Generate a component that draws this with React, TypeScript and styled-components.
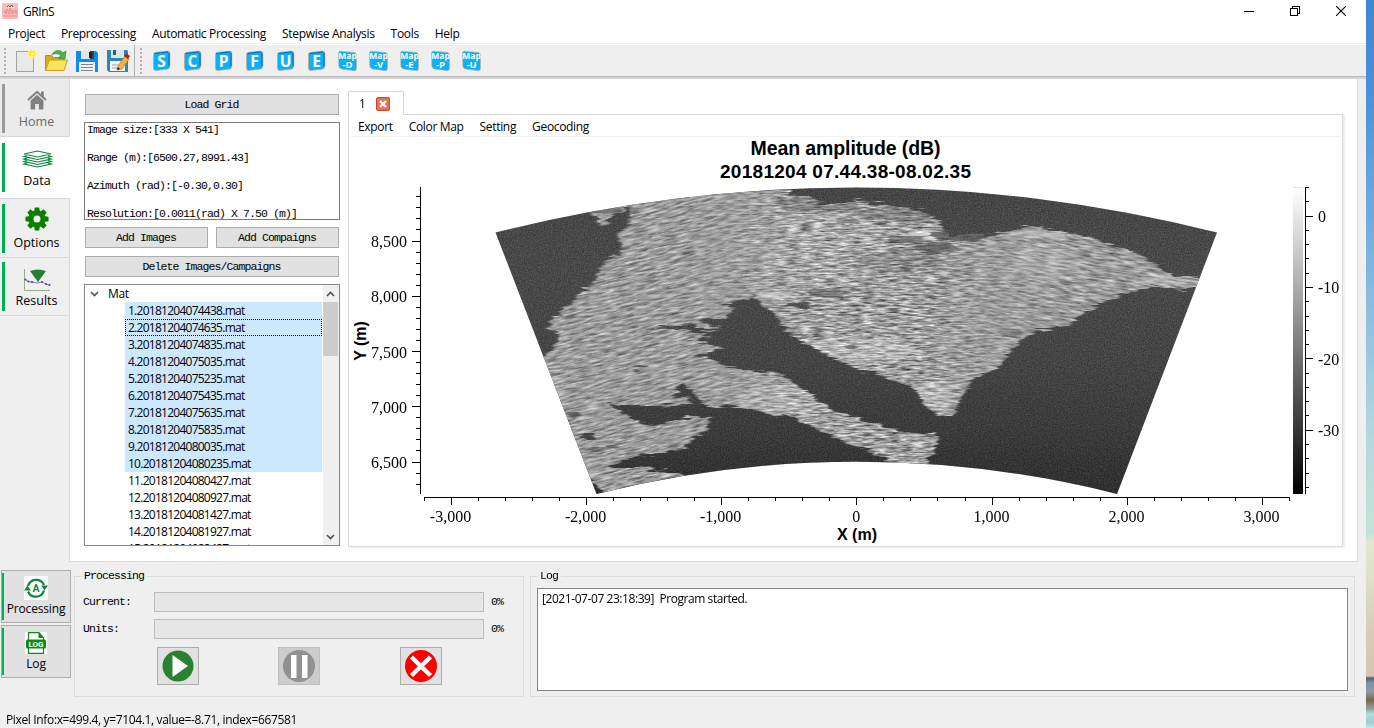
import React from "react";
import styled, { createGlobalStyle, css } from "styled-components";

const UI = '"Open Sans", "Noto Sans", sans-serif';
const MONO = '"Liberation Mono", monospace';

const GlobalStyle = createGlobalStyle`
  * { box-sizing: border-box; }
  body { margin: 0; background: #efefef; overflow: hidden; }
`;

const Desktop = styled.div`
  display: flex;
  width: 1374px;
  height: 728px;
  overflow: hidden;
  font: 12px/17px ${UI};
  letter-spacing: -0.35px;
  color: #000;
`;

const Wallpaper = styled.div`
  width: 8px;
  background: linear-gradient(
    #3f86d2 0, #4a90d8 90px, #6aa8df 200px, #8fc0e4 320px, #b4d9dd 440px, #bfe0d8 500px,
    #c4e2d4 534px, #e4e6cf 542px, #dddfc9 580px, #d6cdb8 630px, #d5c6b0 676px,
    #4a6478 678px, #7d93a3 683px, #8e9aa0 692px, #7a664f 700px, #8fa3a0 709px,
    #b5dcdd 714px, #9fcbd0 722px, #c4e6e6 728px
  );
`;

const Frame = styled.div`
  display: flex;
  flex-direction: column;
  width: 1366px;
  background: #efefef;
`;

const TitleBar = styled.header`
  display: flex;
  align-items: center;
  height: 23px;
  padding: 0 20px 2px 2px;
  background: #fff;
`;

const AppName = styled.span`
  flex: 1;
  padding: 1px 0 0 5px;
  letter-spacing: -0.45px;
`;

const WindowButtons = styled.div`
  display: flex;
  gap: 36px;
  padding-top: 0;
`;

const MenuBar = styled.nav`
  display: flex;
  gap: 16px;
  height: 21px;
  padding: 2px 8px 0;
  background: #fff;
  border-bottom: 1px solid #efefef;
  letter-spacing: -0.32px;
`;

const Toolbar = styled.div`
  display: flex;
  align-items: center;
  height: 35px;
  padding-bottom: 1px;
  border-top: 1px solid #fff;
  border-bottom: 2px solid #d4d4d4;
  box-shadow: inset 0 -1px #b9b9b9;
`;

const Grip = styled.div<{ $left: number; $right: number }>`
  width: 2px;
  height: 26px;
  margin: 0 ${(p) => p.$right}px 0 ${(p) => p.$left}px;
  background: repeating-linear-gradient(#b4b4b4 0 2px, #efefef 2px 4px);
`;

const ToolSlot = styled.div`
  display: flex;
  justify-content: center;
  width: 31px;
`;

const ToolDivider = styled.div`
  width: 1px;
  height: 32px;
  margin-left: 1px;
  background: #b0b0b0;
`;

const Work = styled.div`
  display: flex;
  height: 483px;
`;

const Sidebar = styled.aside`
  display: flex;
  flex-direction: column;
  width: 70px;
  padding-top: 1px;
  border-right: 1px solid #d9d9d9;
`;

const SideTab = styled.div<{ $height: number; $active?: boolean; $muted?: boolean; $gap?: number }>`
  display: flex;
  flex-direction: column;
  align-items: center;
  justify-content: flex-end;
  height: ${(p) => p.$height}px;
  width: ${(p) => (p.$active ? 70 : 69)}px;
  padding: 0 0 ${(p) => p.$gap ?? 5}px 4px;
  border-bottom: 1px solid #d9d9d9;
  background:
    linear-gradient(${(p) => (p.$muted ? "#999, #999" : "#00b050, #00b050")}) 2px 50% / 3px 49px no-repeat,
    ${(p) => (p.$active ? "#fff" : p.$muted ? "#ebebeb" : "#efefef")};
  color: ${(p) => (p.$muted ? "#6a6a6a" : "#000")};
  font-size: 12.5px;
  line-height: 18px;
  letter-spacing: 0;
`;

const TabIcon = styled.div<{ $lift?: number }>`
  display: flex;
  flex: 1;
  align-items: flex-end;
  padding-bottom: ${(p) => p.$lift ?? 3}px;
`;

const Page = styled.main`
  display: flex;
  gap: 8px;
  width: 1288px;
  padding: 12px 14px 14px 14px;
  background: #fff;
  border-right: 1px solid #d9d9d9;
  border-bottom: 1px solid #d9d9d9;
`;

const monoText = css`
  font: 11.5px/14px ${MONO};
  letter-spacing: -0.9px;
`;

const DataPanel = styled.section`
  display: flex;
  flex-direction: column;
  width: 256px;
  padding-top: 3px;
`;

const PushButton = styled.button`
  ${monoText}
  flex: 1;
  height: 21px;
  flex-shrink: 0;
  padding: 1px 1px 0 0;
  border: 1px solid #adadad;
  background: #e1e1e1;
  color: #000;
`;

const ButtonRow = styled.div<{ $bottom: number }>`
  display: flex;
  gap: 8px;
  padding: 0 1px;
  margin-bottom: ${(p) => p.$bottom}px;
`;

const InfoBox = styled.div`
  ${monoText}
  height: 98px;
  margin-bottom: 7px;
  padding-left: 2px;
  border: 1px solid #7a7a7a;
  overflow: hidden;
  white-space: pre;
`;

const TreeBox = styled.div`
  display: flex;
  height: 262px;
  border: 1px solid #828790;
`;

const TreeItems = styled.div`
  flex: 1;
  overflow: hidden;
`;

const TreeRoot = styled.div`
  display: flex;
  align-items: center;
  gap: 9px;
  height: 17px;
  padding-left: 5px;
`;

const TreeItem = styled.div<{ $selected?: boolean; $focused?: boolean }>`
  height: 17px;
  margin-left: 40px;
  margin-right: 1px;
  padding-left: 3px;
  line-height: 17px;
  letter-spacing: -0.74px;
  background: ${(p) => (p.$selected ? "#cce8ff" : "transparent")};
  ${(p) => p.$focused && "outline: 1px dotted #000; outline-offset: -1px;"}
`;

const ScrollTrack = styled.div`
  display: flex;
  flex-direction: column;
  width: 16px;
  background: #f0f0f0;
`;

const ScrollThumb = styled.div`
  width: 15px;
  height: 54px;
  background: #cdcdcd;
`;

const ScrollArrow = styled.div<{ $push?: boolean }>`
  display: flex;
  align-items: center;
  justify-content: center;
  width: 15px;
  height: 17px;
  ${(p) => p.$push && "margin-top: auto;"}
`;

const PlotPanel = styled.section`
  display: flex;
  flex-direction: column;
  width: 995px;
`;

const PlotTab = styled.div`
  display: flex;
  align-items: center;
  gap: 10px;
  width: 56px;
  height: 24px;
  flex-shrink: 0;
  margin-bottom: -1px;
  padding-left: 10px;
  border: 1px solid #d9d9d9;
  border-bottom: 0;
  background: #fff;
  z-index: 1;
`;

const PlotFrame = styled.div`
  height: 433px;
  flex-shrink: 0;
  border: 1px solid #d9d9d9;
  box-shadow: 2px 1px #f0f0f0;
`;

const PlotMenu = styled.nav`
  display: flex;
  gap: 16px;
  height: 22px;
  margin: 0 1px;
  padding: 3px 7px 0 8px;
  border-bottom: 1px solid #f2f2f2;
  letter-spacing: -0.33px;
`;

const Chart = styled.svg`
  display: block;
  font-family: "Liberation Serif", serif;
  font-size: 16px;
  letter-spacing: 0;
`;

const Bottom = styled.div`
  display: flex;
  height: 149px;
  padding-top: 8px;
`;

const DockButtons = styled.div`
  display: flex;
  flex-direction: column;
  gap: 2px;
  width: 74px;
  padding-left: 1px;
`;

const DockButton = styled.div`
  display: flex;
  flex-direction: column;
  align-items: center;
  justify-content: space-between;
  width: 70px;
  height: 53px;
  padding: 5px 0 4px;
  border: 1px solid #adadad;
  background: linear-gradient(#00b050, #00b050) 0 50% / 2px 47px no-repeat, #e1e1e1;
  font-size: 12px;
  line-height: 18px;
  letter-spacing: -0.15px;
`;

const Group = styled.fieldset<{ $width: number; $right: number }>`
  width: ${(p) => p.$width}px;
  height: 127px;
  margin: 0 ${(p) => p.$right}px 0 0;
  padding: 0;
  border: 1px solid #dcdcdc;
`;

const GroupTitle = styled.legend`
  ${monoText}
  height: 12px;
  line-height: 12px;
  margin-left: 7px;
  padding: 0 3px 0 2px;
`;

const ProgressList = styled.div`
  display: flex;
  flex-direction: column;
  gap: 7px;
  padding: 10px 0 0 8px;
`;

const ProgressRow = styled.div`
  ${monoText}
  display: flex;
  align-items: center;
  height: 20px;
  line-height: 16px;
`;

const ProgressName = styled.span`
  width: 71px;
`;

const ProgressTrack = styled.div`
  width: 330px;
  height: 20px;
  margin-right: 7px;
  border: 1px solid #bcbcbc;
  background: #e6e6e6;
`;

const ControlRow = styled.div`
  display: flex;
  padding: 8px 0 0 82px;
`;

const ControlButton = styled.button<{ $disabled?: boolean; $after?: number }>`
  display: flex;
  align-items: center;
  justify-content: center;
  width: 42px;
  height: 38px;
  margin-right: ${(p) => p.$after ?? 0}px;
  padding: 0;
  border: 1px solid ${(p) => (p.$disabled ? "#bfbfbf" : "#adadad")};
  background: ${(p) => (p.$disabled ? "#cccccc" : "#e1e1e1")};
`;

const LogBox = styled.div`
  width: 811px;
  height: 103px;
  margin-left: 6px;
  margin-top: 6px;
  padding: 1px 4px;
  border: 1px solid #828790;
  background: #fff;
  white-space: pre;
  letter-spacing: -0.43px;
`;

const StatusBar = styled.footer`
  padding: 0 6px;
`;

/* ---------- icons ---------- */

const LogoIcon = () => (
  <svg width="16" height="16" viewBox="0 0 16 16">
    <rect width="16" height="16" fill="#fcb9b9" />
    <path d="M3 5Q8-1 13 5Z" fill="#e9dede" />
    <path d="M5 4l1.500-1.500L8 4l1.500-2L11 4" stroke="#555" fill="none" />
    <path d="M1 10l2-3 1 4 1-5 2 5 1-6 2 6 1-4 2 3 1-3 1 4M1 13h14" stroke="#f07f84" strokeWidth=".8" fill="none" />
  </svg>
);

const NewIcon = () => (
  <svg width="24" height="24" viewBox="0 0 24 24">
    <rect x="3.500" y="2.500" width="17" height="20" fill="#e9e9e7" stroke="#a3a3a0" />
    <circle cx="19" cy="5" r="5" fill="#fdf27a" opacity=".75" />
    <circle cx="19" cy="5" r="2.600" fill="#fff200" />
    <circle cx="19" cy="5" r="1.200" fill="#fffde0" />
  </svg>
);

const OpenIcon = () => (
  <svg width="24" height="24" viewBox="0 0 24 24">
    <path d="M1.500 21.500V6.500h6l2 2h10v13z" fill="#d6ae1c" stroke="#b3901a" />
    <path d="M8 6c2-5 8-6 11-2l3-2-1 8-7-1 3-2c-2-3-6-3-9-1z" fill="#4db34a" stroke="#2c8a35" strokeWidth=".7" />
    <path d="M1.500 21.500l4-10.500h18l-3.500 10.500z" fill="#fbe45b" stroke="#c9a01e" />
  </svg>
);

const SaveIcon = () => (
  <svg width="24" height="24" viewBox="0 0 24 24">
    <path d="M1 2h20l2 2v19H1z" fill="#0d8ce8" />
    <path d="M6 2h13v8H6z" fill="#3d4450" />
    <path d="M6 2h9v8H6z" fill="#dfe6ea" />
    <rect x="14" y="3" width="3" height="6" fill="#222" />
    <path d="M4 13h16v10H4z" fill="#eef1f2" />
    <path d="M6 15.500h12M6 18.500h12M6 21.500h12" stroke="#7c8790" />
  </svg>
);

const SaveAsIcon = () => (
  <svg width="24" height="24" viewBox="0 0 24 24">
    <path d="M1 1h20l1 1v21H3l-2-2z" fill="#2f86b6" />
    <path d="M5 1h13v8H5z" fill="#d9e7ee" />
    <rect x="7" y="1" width="3" height="5" fill="#2f5f7c" />
    <path d="M4 12h15v10H4z" fill="#f4f7f8" />
    <path d="M6 16h7M6 19h6" stroke="#9aa6ad" />
    <path d="M12 17l7-10 4 3-7 10-5 1z" fill="#f2b43c" stroke="#b87818" strokeWidth=".7" />
    <path d="M18 7l2-3 4 3-2 3z" fill="#b81f24" />
    <path d="M11 21l1-3 2 2z" fill="#222" />
  </svg>
);

const LetterIcon = ({ lines }: { lines: string[] }) => (
  <svg width="20" height="22" viewBox="0 0 20 22" fontFamily='"Open Sans", sans-serif' fontWeight="700" fill="#fff" textAnchor="middle">
    {lines.length === 1 ? (
      <>
        <path d="M1.500 4Q2 2.500 4 2.300L15.500 1.200Q17.800 1 17.800 3v13q0 2.500-2 3L4 20.500Q1.500 20.700 1.500 18z" fill="#0ab0f8" stroke="#c9a58a" strokeWidth=".8" />
        <path d="M2.500 3.500L16 1.800M17 3v13" stroke="#0b6fae" strokeWidth="1.200" fill="none" />
        <text x="9.500" y="16.500" fontSize="15.500" letterSpacing="0">{lines[0]}</text>
      </>
    ) : (
      <>
        <path d="M.5 3Q.5 1 2.500 1.200L16.500 2.500Q18.500 3 18.500 5v13q0 3-2 2.700L3.500 19Q1 18.500 .8 16z" fill="#0ab0f8" stroke="#b9b79a" strokeWidth=".7" />
        <text letterSpacing="0" fontSize="8.500">
          <tspan x="9.500" y="9">{lines[0]}</tspan>
          <tspan x="9.500" y="18" fontSize="9.500">{lines[1]}</tspan>
        </text>
      </>
    )}
  </svg>
);

const HomeIcon = () => (
  <svg width="20" height="20" viewBox="0 0 20 20" fill="#808080">
    <path d="M14 1.500h2.800v6L14 5z" />
    <path d="M1 10L10 1.800 19 10" fill="none" stroke="#808080" strokeWidth="2" />
    <path d="M3.600 10.500L10 4.700l6.400 5.800V19.500h-4.600v-5.500H8.200v5.500H3.600z" />
  </svg>
);

const LayersIcon = () => (
  <svg width="31" height="18" viewBox="0 0 31 18" fill="none" stroke="#0b8a3e" strokeWidth="1.200">
    <path d="M15.500 1L29 4 15.500 7 2 4z" fill="#fff" />
    <path d="M5 5.500L2 6.500 15.500 9.500 29 6.500 26 5.500M5 8L2 9 15.500 12 29 9 26 8M5 10.500L2 11.500 15.500 14.500 29 11.500 26 10.500M5 13L2 14 15.500 17 29 14 26 13" />
  </svg>
);

const GearIcon = () => (
  <svg width="24" height="24" viewBox="-12 -12 24 24" fill="#0a8000">
    {[0, 45, 90, 135, 180, 225, 270, 315].map((a) => (
      <path key={a} d="M-3-7L-2.200-11.500H2.200L3-7z" transform={`rotate(${a})`} />
    ))}
    <circle r="6" fill="none" stroke="#0a8000" strokeWidth="5" />
  </svg>
);

const ResultsIcon = () => (
  <svg width="30" height="24" viewBox="0 0 30 24">
    <path d="M2.500 1v21.500H28" fill="none" stroke="#8fb08f" />
    <path d="M2 11l4 2.500 4 .5 5 1 5-1 4 2 4 1" fill="none" stroke="#8a76a8" />
    <g fill="#7030a0"><circle cx="3.500" cy="11.500" r="1" /><circle cx="6.500" cy="13.500" r="1" /><circle cx="10" cy="14" r="1" /><circle cx="20" cy="14" r="1" /><circle cx="24" cy="16" r="1" /><circle cx="27.500" cy="17" r="1" /></g>
    <path d="M8 3Q16 0 24 3L16 14z" fill="#258032" />
  </svg>
);

const CycleIcon = () => (
  <svg width="24" height="24" viewBox="0 0 24 24">
    <rect width="24" height="24" fill="#fff" />
    <g fill="none" stroke="#12853f" strokeWidth="2.200">
      <path d="M4 10A8.500 8.500 0 0 1 20 9" />
      <path d="M20 14.500A8.500 8.500 0 0 1 4 15.500" />
    </g>
    <path d="M17 9.500h7l-3.500 5zM7 14.500H0l3.500-5z" fill="#12853f" />
    <text x="12" y="16" fontSize="10.500" fontWeight="700" letterSpacing="0" textAnchor="middle" fill="#12853f" fontFamily="Roboto, sans-serif">A</text>
  </svg>
);

const LogIcon = () => (
  <svg width="22" height="24" viewBox="0 -1 22 24">
    <rect width="22" height="22" fill="#fff" />
    <path d="M3.500 8V.700H14l4.500 5V8M3.500 16v5.300h15V16" fill="none" stroke="#0c8a14" strokeWidth="1.200" />
    <path d="M13.500.500v5.500h5z" fill="#0c8a14" />
    <rect x="1" y="7.500" width="20" height="9" rx="1.500" fill="#0c8a14" />
    <text x="11" y="14.800" fontSize="8" fontWeight="700" letterSpacing="0" textAnchor="middle" fill="#fff" fontFamily="Roboto, sans-serif">LOG</text>
  </svg>
);

const Chevron = ({ up }: { up?: boolean }) => (
  <svg width="9" height="6" viewBox="0 0 9 6">
    <path d={up ? "M1 5l3.500-3.500L8 5" : "M1 1l3.500 3.500L8 1"} fill="none" stroke="#505050" strokeWidth="1.600" />
  </svg>
);

const CloseTabIcon = () => (
  <svg width="14" height="14" viewBox="0 0 14 14">
    <rect x=".5" y=".5" width="13" height="13" rx="1.500" fill="#dd7a54" stroke="#d4402a" />
    <path d="M4 4l6 6M10 4l-6 6" stroke="#fff" strokeWidth="2.200" />
  </svg>
);

/* ---------- radar amplitude plot ---------- */

const DARK_AREAS = [
  "M480 220L520 200 590 190 590 212 598 218 599 225 606 226 608 216 620 214 632 205 628 225 617 234 623 247 620 255 604 262 597 276 588 287 575 298 565 308 555 318 547 328 560 335 552 350 547 356 530 365Z",
  "M753 297L773 311 780 323 790 335 813 348 833 358 863 372 883 375 900 382 917 392 927 407 937 415 950 415 958 407 962 395 970 382 987 373 1000 365 1013 350 1023 338 1040 330 1067 327 1083 313 1103 302 1127 293 1147 287 1163 287 1177 290 1195 288 1240 290 1130 510 925 480 927 463 935 447 940 438 933 434 907 435 893 428 847 415 833 410 813 397 793 383 780 373 760 372 730 367 710 360 693 355 713 353 720 348 697 342 680 341 710 337 690 332 677 329 643 328 680 325 713 330 722 327 697 320 727 317 733 307 717 304 747 300Z",
  "M607 405L630 404 650 407 680 404 693 400 680 398 670 395 680 392 672 388 682 384 690 391 700 400 707 407 730 405 763 412 790 417 813 428 837 438 860 447 873 453 890 461 890 480 700 490 683 475 667 472 640 467 608 468 627 460 647 454 677 452 693 440 710 425 712 417 693 417 670 422 652 426 633 421 623 413Z",
  "M785 170L790 194 807 196 820 203 833 205 860 200 890 206 923 212 940 223 950 235 973 234 987 236 1000 232 1027 227 1057 230 1093 238 1127 250 1150 260 1167 273 1180 277 1198 277 1240 270 1240 180Z",
  "M588 480L604 492 590 500Z",
];

const DARK_SPOTS: [number, number, number, number, number][] = [
  [573, 415, 8, 3, 0.6], [588, 436, 8, 2, 0.9], [596, 449, 9, 2, 0.5], [640, 366, 8, 2, 0.8],
  [612, 448, 7, 2, 0.5], [797, 305, 12, 3, 0.9], [827, 293, 22, 5, 0.45], [848, 222, 12, 4, 0.5],
  [907, 240, 18, 5, 0.5], [935, 248, 22, 6, 0.6], [960, 235, 30, 6, 0.7], [900, 215, 50, 7, 0.3],
  [850, 348, 6, 3, 0.6], [820, 205, 40, 8, 0.3], [1010, 333, 12, 5, 0.3], [900, 262, 45, 12, 0.22],
  [600, 209, 22, 5, 0.5], [620, 222, 12, 8, 0.6],
];

const BRIGHT_SPOTS: [number, number, number, number, number][] = [
  [927, 235, 18, 6, 0.4], [965, 223, 18, 5, 0.35], [775, 295, 18, 4, 0.4], [855, 350, 60, 12, 0.25],
  [1045, 262, 35, 18, 0.12], [850, 220, 20, 6, 0.3], [1060, 234, 50, 4, 0.25], [935, 395, 18, 14, 0.25],
  [785, 400, 50, 16, 0.16], [1165, 280, 25, 6, 0.2], [820, 250, 70, 40, 0.08],
];

const Spots = ({ items, fill }: { items: [number, number, number, number, number][]; fill: string }) => (
  <>
    {items.map(([cx, cy, rx, ry, opacity], i) => (
      <ellipse key={i} cx={cx} cy={cy} rx={rx} ry={ry} fill={fill} opacity={opacity} />
    ))}
  </>
);

const WEDGE = "M495.500 232.500A1214 993.500 0 0 1 1217 232.500L1117 494A878 718 0 0 0 596.500 494Z";

const RadarImage = () => (
  <g>
    <defs>
      <clipPath id="wedge"><path d={WEDGE} /></clipPath>
      <linearGradient id="seaShade" x1="0" y1="0" x2="0" y2="1">
        <stop offset="0" stopColor="#fff" stopOpacity=".05" />
        <stop offset="1" stopColor="#000" stopOpacity=".25" />
      </linearGradient>
      <filter id="seaNoise" x="0" y="0" width="1" height="1" colorInterpolationFilters="sRGB">
        <feTurbulence type="fractalNoise" baseFrequency=".7" numOctaves="2" seed="4" />
        <feColorMatrix values=".26 0 0 0 .105 .26 0 0 0 .105 .26 0 0 0 .105 0 0 0 0 1" />
      </filter>
      <filter id="landNoise" x="0" y="0" width="1" height="1" colorInterpolationFilters="sRGB">
        <feTurbulence type="fractalNoise" baseFrequency=".08 .55" numOctaves="3" seed="9" />
        <feColorMatrix values="1 0 0 0 .125 1 0 0 0 .125 1 0 0 0 .125 0 0 0 0 1" />
      </filter>
      <filter id="calmNoise" x="0" y="0" width="1" height="1" colorInterpolationFilters="sRGB">
        <feTurbulence type="fractalNoise" baseFrequency=".07 .55" numOctaves="3" seed="21" />
        <feColorMatrix values=".8 0 0 0 .21 .8 0 0 0 .21 .8 0 0 0 .21 0 0 0 0 1" />
      </filter>
      <filter id="roughEdge" x="-.05" y="-.05" width="1.100" height="1.100" colorInterpolationFilters="sRGB">
        <feTurbulence type="fractalNoise" baseFrequency=".05 .3" numOctaves="3" seed="2" result="n" />
        <feDisplacementMap in="SourceGraphic" in2="n" scale="11" xChannelSelector="R" yChannelSelector="A" result="d" />
        <feGaussianBlur in="d" stdDeviation="1 .6" />
      </filter>
      <filter id="haze"><feGaussianBlur stdDeviation="3 1.200" /></filter>
      <linearGradient id="fadeLeft" gradientUnits="userSpaceOnUse" x1="690" y1="0" x2="800" y2="0">
        <stop offset="0" stopColor="#fff" /><stop offset="1" stopColor="#000" />
      </linearGradient>
      <linearGradient id="fadeRight" gradientUnits="userSpaceOnUse" x1="920" y1="0" x2="1060" y2="0">
        <stop offset="0" stopColor="#000" /><stop offset="1" stopColor="#fff" />
      </linearGradient>
      <mask id="leftMask" maskUnits="userSpaceOnUse" x="480" y="180" width="750" height="320"><rect x="480" y="180" width="750" height="320" fill="url(#fadeLeft)" /></mask>
      <mask id="rightMask" maskUnits="userSpaceOnUse" x="480" y="180" width="750" height="320"><rect x="480" y="180" width="750" height="320" fill="url(#fadeRight)" /></mask>
      <mask id="land" maskUnits="userSpaceOnUse" x="480" y="180" width="750" height="320">
        <g filter="url(#roughEdge)">
          <rect x="440" y="140" width="830" height="400" fill="#fff" />
          {DARK_AREAS.map((d) => <path key={d} d={d} fill="#000" />)}
          <Spots items={DARK_SPOTS} fill="#000" />
        </g>
      </mask>
    </defs>
    <g clipPath="url(#wedge)">
      <rect x="490" y="180" width="740" height="320" filter="url(#seaNoise)" />
      <rect x="490" y="180" width="740" height="320" fill="url(#seaShade)" />
      <g mask="url(#land)">
        <rect x="490" y="180" width="740" height="320" filter="url(#landNoise)" />
        <g mask="url(#leftMask)">
          <g transform="rotate(-13 640 340)"><rect x="440" y="100" width="400" height="460" filter="url(#calmNoise)" /></g>
        </g>
        <g mask="url(#rightMask)">
          <g transform="rotate(8 1080 300)"><rect x="880" y="120" width="370" height="400" filter="url(#calmNoise)" /></g>
        </g>
        <g filter="url(#haze)"><Spots items={BRIGHT_SPOTS} fill="#fff" /></g>
      </g>
    </g>
  </g>
);

const range = (n: number) => Array.from({ length: n }, (_, i) => i);

const RadarChart = () => (
  <Chart width="993" height="409" viewBox="349 137 993 409">
    <g fontFamily='"Liberation Sans", sans-serif' fontWeight="700" textAnchor="middle">
      <text x="845.500" y="155" fontSize="19.500" textLength="190">Mean amplitude (dB)</text>
      <text x="845.500" y="178" fontSize="19" textLength="251">20181204 07.44.38-08.02.35</text>
      <text x="857" y="540" fontSize="16">X (m)</text>
      <text transform="translate(365.500 341) rotate(-90)" fontSize="16">Y (m)</text>
    </g>
    <RadarImage />
    <g shapeRendering="crispEdges" stroke="#000" fill="none">
      <path d="M420.500 187V494M424 497.500H1290M1305.500 187V494" />
      {range(27).map((i) => {
        const y = Math.round(197.300 + i * 11.050) - 0.5;
        return <path key={i} d={`M${i % 5 === 4 ? 412 : 416} ${y}H420`} />;
      })}
      {range(33).map((i) => {
        const x = Math.floor(424.800 + i * 27.010) + 0.5;
        return <path key={i} d={`M${x} 498V${i % 5 === 1 ? 505 : 501}`} />;
      })}
      {range(22).map((i) => {
        const y = Math.round(187 + i * 14.280) + 0.5;
        return <path key={i} d={`M1306 ${y}H${i % 5 === 2 ? 1313 : 1309}`} />;
      })}
    </g>
    <g textAnchor="end">
      {["8,500", "8,000", "7,500", "7,000", "6,500"].map((t, i) => (
        <text key={t} x="407" y={247 + i * 55.250}>{t}</text>
      ))}
    </g>
    <g textAnchor="middle">
      {["-3,000", "-2,000", "-1,000", "0", "1,000", "2,000", "3,000"].map((t, i) => (
        <text key={t} x={(i < 3 ? 450.500 : 451) + i * 135.100} y="522">{t}</text>
      ))}
    </g>
    {["0", "-10", "-20", "-30"].map((t, i) => (
      <text key={t} x="1318" y={222 + i * 71.300}>{t}</text>
    ))}
    <defs>
      <linearGradient id="scale" x1="0" y1="0" x2="0" y2="1">
        <stop offset="0" stopColor="#fff" /><stop offset="1" stopColor="#000" />
      </linearGradient>
    </defs>
    <rect x="1293" y="188" width="10" height="306" fill="url(#scale)" />
    <rect x="1293" y="187" width="10" height="1" fill="#ffff00" />
  </Chart>
);

/* ---------- data ---------- */

const FILES = [
  "1.20181204074438.mat", "2.20181204074635.mat", "3.20181204074835.mat", "4.20181204075035.mat",
  "5.20181204075235.mat", "6.20181204075435.mat", "7.20181204075635.mat", "8.20181204075835.mat",
  "9.20181204080035.mat", "10.20181204080235.mat", "11.20181204080427.mat", "12.20181204080927.mat",
  "13.20181204081427.mat", "14.20181204081927.mat", "15.20181204082427.mat",
];

const INFO = "Image size:[333 X 541]\n\nRange (m):[6500.27,8991.43]\n\nAzimuth (rad):[-0.30,0.30]\n\nResolution:[0.0011(rad) X 7.50 (m)]";

export default function App() {
  return (
    <Desktop>
      <GlobalStyle />
      <Frame>
        <TitleBar>
          <LogoIcon />
          <AppName>GRInS</AppName>
          <WindowButtons>
            <svg width="10" height="10" viewBox="0 0 10 10" shapeRendering="crispEdges"><path d="M0 5.500h10" stroke="#000" /></svg>
            <svg width="10" height="10" viewBox="0 0 10 10" fill="none" stroke="#000" shapeRendering="crispEdges"><path d="M.5 2.500h7v7h-7zM2.500 2.500v-2h7v7h-2" /></svg>
            <svg width="10" height="10" viewBox="0 0 10 10"><path d="M0 0l10 10M10 0L0 10" stroke="#000" strokeWidth="1.100" /></svg>
          </WindowButtons>
        </TitleBar>
        <MenuBar>
          {["Project", "Preprocessing", "Automatic Processing", "Stepwise Analysis", "Tools", "Help"].map((m) => (
            <span key={m}>{m}</span>
          ))}
        </MenuBar>
        <Toolbar>
          <Grip $left={4} $right={3} />
          <ToolSlot><NewIcon /></ToolSlot>
          <ToolSlot><OpenIcon /></ToolSlot>
          <ToolSlot><SaveIcon /></ToolSlot>
          <ToolSlot><SaveAsIcon /></ToolSlot>
          <ToolDivider />
          <Grip $left={5} $right={4} />
          {["S", "C", "P", "F", "U", "E"].map((l) => (
            <ToolSlot key={l}><LetterIcon lines={[l]} /></ToolSlot>
          ))}
          {["D", "V", "E", "P", "U"].map((l) => (
            <ToolSlot key={l}><LetterIcon lines={["Map", `-${l}`]} /></ToolSlot>
          ))}
        </Toolbar>
        <Work>
          <Sidebar>
            <SideTab $height={57} $muted $gap={5}><TabIcon><HomeIcon /></TabIcon>Home</SideTab>
            <SideTab $height={62} $active $gap={8}><TabIcon $lift={4}><LayersIcon /></TabIcon>Data</SideTab>
            <SideTab $height={59}><TabIcon><GearIcon /></TabIcon>Options</SideTab>
            <SideTab $height={58}><TabIcon $lift={0}><ResultsIcon /></TabIcon>Results</SideTab>
          </Sidebar>
          <Page>
            <DataPanel>
              <ButtonRow $bottom={7}><PushButton>Load Grid</PushButton></ButtonRow>
              <InfoBox>{INFO}</InfoBox>
              <ButtonRow $bottom={8}>
                <PushButton>Add Images</PushButton>
                <PushButton>Add Compaigns</PushButton>
              </ButtonRow>
              <ButtonRow $bottom={7}><PushButton>Delete Images/Campaigns</PushButton></ButtonRow>
              <TreeBox>
                <TreeItems>
                  <TreeRoot><Chevron />Mat</TreeRoot>
                  {FILES.map((f, i) => (
                    <TreeItem key={f} $selected={i < 10} $focused={i === 1}>{f}</TreeItem>
                  ))}
                </TreeItems>
                <ScrollTrack>
                  <ScrollArrow><Chevron up /></ScrollArrow>
                  <ScrollThumb />
                  <ScrollArrow $push><Chevron /></ScrollArrow>
                </ScrollTrack>
              </TreeBox>
            </DataPanel>
            <PlotPanel>
              <PlotTab>1<CloseTabIcon /></PlotTab>
              <PlotFrame>
                <PlotMenu>
                  {["Export", "Color Map", "Setting", "Geocoding"].map((m) => <span key={m}>{m}</span>)}
                </PlotMenu>
                <RadarChart />
              </PlotFrame>
            </PlotPanel>
          </Page>
        </Work>
        <Bottom>
          <DockButtons>
            <DockButton><CycleIcon />Processing</DockButton>
            <DockButton><LogIcon />Log</DockButton>
          </DockButtons>
          <Group $width={450} $right={6}>
            <GroupTitle>Processing</GroupTitle>
            <ProgressList>
              <ProgressRow>
                <ProgressName>Current:</ProgressName><ProgressTrack />0%
              </ProgressRow>
              <ProgressRow>
                <ProgressName>Units:</ProgressName><ProgressTrack />0%
              </ProgressRow>
            </ProgressList>
            <ControlRow>
              <ControlButton $after={79}>
                <svg width="32" height="32" viewBox="0 0 32 32"><circle cx="16" cy="16" r="15.500" fill="#288232" /><path d="M10.500 5v22L26 16z" fill="#fff" /></svg>
              </ControlButton>
              <ControlButton $disabled $after={80}>
                <svg width="32" height="32" viewBox="0 0 32 32"><circle cx="16" cy="16" r="16" fill="#919191" /><path d="M8 5h5.500v23H8zM19 5h5.500v23H19z" fill="#fff" /></svg>
              </ControlButton>
              <ControlButton>
                <svg width="32" height="32" viewBox="0 0 32 32"><circle cx="16" cy="16" r="16" fill="#f00" /><path d="M6.500 7l19 18.500M25.500 7l-19 18.500" stroke="#fff" strokeWidth="4.500" /></svg>
              </ControlButton>
            </ControlRow>
          </Group>
          <Group $width={825} $right={0}>
            <GroupTitle>Log</GroupTitle>
            <LogBox>[2021-07-07 23:18:39]  Program started.</LogBox>
          </Group>
        </Bottom>
        <StatusBar>Pixel Info:x=499.4, y=7104.1, value=-8.71, index=667581</StatusBar>
      </Frame>
      <Wallpaper />
    </Desktop>
  );
}
